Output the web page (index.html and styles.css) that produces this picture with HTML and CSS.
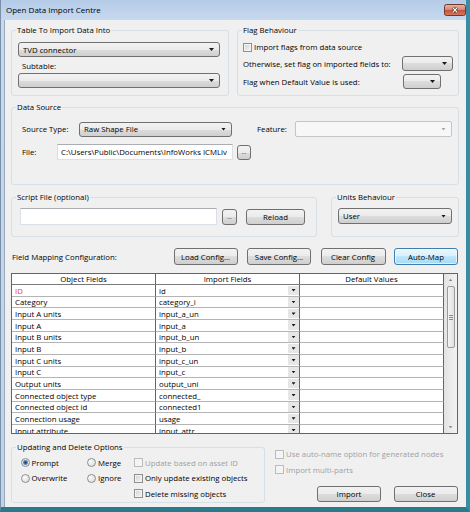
FILE: index.html
```html
<!DOCTYPE html>
<html lang="en">
<head>
    <meta charset="UTF-8">
    <title>Open Data Import Centre</title>
    <link rel="stylesheet" href="styles.css">
</head>
<body>

<div class="window">
    <div class="titlebar">
        <span class="title">Open Data Import Centre</span>
        <span class="close-btn">
            <svg width="22" height="12" viewBox="0 0 22 12">
                <defs>
                    <linearGradient id="closeGrad" x1="0" y1="0" x2="0" y2="1">
                        <stop offset="0" stop-color="#eab4a6"/>
                        <stop offset="0.45" stop-color="#d98a75"/>
                        <stop offset="0.5" stop-color="#c4523b"/>
                        <stop offset="1" stop-color="#d47a60"/>
                    </linearGradient>
                </defs>
                <rect x="0.5" y="0.5" width="21" height="11" rx="2" fill="url(#closeGrad)" stroke="#70392f"/>
                <path d="M8.8 3.6 L13.2 8.4 M13.2 3.6 L8.8 8.4" stroke="#4d2a24" stroke-width="2.6"/>
                <path d="M8.8 3.6 L13.2 8.4 M13.2 3.6 L8.8 8.4" stroke="#fff" stroke-width="1.3"/>
            </svg>
        </span>
    </div>

    <div class="client">
        <!-- Target table and flag options -->
        <div class="top-row">
            <fieldset class="group table-group">
                <legend>Table To Import Data Into</legend>
                <div class="body">
                    <div class="combo"><span>TVD connector</span></div>
                    <div class="subtable-label">Subtable:</div>
                    <div class="combo combo-sub"><span></span></div>
                </div>
            </fieldset>

            <fieldset class="group flag-group">
                <legend>Flag Behaviour</legend>
                <div class="body">
                    <div class="check"><span class="box"></span>Import flags from data source</div>
                    <div class="flag-row first">
                        <span class="flag-label">Otherwise, set flag on imported fields to:</span>
                        <div class="combo flag-combo"><span></span></div>
                    </div>
                    <div class="flag-row">
                        <span class="flag-label">Flag when Default Value is used:</span>
                        <div class="combo flag-combo short"><span></span></div>
                    </div>
                </div>
            </fieldset>
        </div>

        <!-- Data source -->
        <fieldset class="group source-group">
            <legend>Data Source</legend>
            <div class="body">
                <div class="source-row">
                    <span class="source-label">Source Type:</span>
                    <div class="combo source-combo"><span>Raw Shape File</span></div>
                    <span class="feature-label">Feature:</span>
                    <div class="combo disabled feature-combo"><span></span></div>
                </div>
                <div class="file-row">
                    <span class="file-label">File:</span>
                    <div class="textbox file-box">C:\Users\Public\Documents\InfoWorks ICMLiv</div>
                    <div class="btn dots file-dots">...</div>
                </div>
            </div>
        </fieldset>

        <!-- Script + units -->
        <div class="script-row">
            <fieldset class="group script-group">
                <legend>Script File (optional)</legend>
                <div class="body">
                    <div class="textbox script-box"></div>
                    <div class="btn dots script-dots">...</div>
                    <div class="btn reload-btn">Reload</div>
                </div>
            </fieldset>
            <fieldset class="group units-group">
                <legend>Units Behaviour</legend>
                <div class="body">
                    <div class="combo units-combo"><span>User</span></div>
                </div>
            </fieldset>
        </div>

        <!-- Field mapping -->
        <div class="mapping-row">
            <span class="mapping-label">Field Mapping Configuration:</span>
            <div class="btn map-btn">Load Config...</div>
            <div class="btn map-btn">Save Config...</div>
            <div class="btn map-btn clear">Clear Config</div>
            <div class="btn map-btn hot">Auto-Map</div>
        </div>

        <div class="grid">
            <div class="grid-table">
                <div class="grid-head">
                    <div class="hcell">Object Fields</div>
                    <div class="hcell">Import Fields</div>
                    <div class="hcell last">Default Values</div>
                </div>
                <div class="grid-body">
                    <div class="cell key">ID</div><div class="cell pick"><span>id</span><i></i></div><div class="cell val"></div>
                    <div class="cell">Category</div><div class="cell pick"><span>category_i</span><i></i></div><div class="cell val"></div>
                    <div class="cell">Input A units</div><div class="cell pick"><span>input_a_un</span><i></i></div><div class="cell val"></div>
                    <div class="cell">Input A</div><div class="cell pick"><span>input_a</span><i></i></div><div class="cell val"></div>
                    <div class="cell">Input B units</div><div class="cell pick"><span>input_b_un</span><i></i></div><div class="cell val"></div>
                    <div class="cell">Input B</div><div class="cell pick"><span>input_b</span><i></i></div><div class="cell val"></div>
                    <div class="cell">Input C units</div><div class="cell pick"><span>input_c_un</span><i></i></div><div class="cell val"></div>
                    <div class="cell">Input C</div><div class="cell pick"><span>input_c</span><i></i></div><div class="cell val"></div>
                    <div class="cell">Output units</div><div class="cell pick"><span>output_uni</span><i></i></div><div class="cell val"></div>
                    <div class="cell">Connected object type</div><div class="cell pick"><span>connected_</span><i></i></div><div class="cell val"></div>
                    <div class="cell">Connected object id</div><div class="cell pick"><span>connected1</span><i></i></div><div class="cell val"></div>
                    <div class="cell">Connection usage</div><div class="cell pick"><span>usage</span><i></i></div><div class="cell val"></div>
                    <div class="cell">Input attribute</div><div class="cell pick"><span>input_attr</span><i></i></div><div class="cell val"></div>
                </div>
            </div>
            <div class="scrollbar">
                <div class="sb-arrow up"><i></i></div>
                <div class="sb-thumb"><i></i></div>
                <div class="sb-track"></div>
                <div class="sb-arrow down"><i></i></div>
            </div>
        </div>

        <!-- Bottom options and actions -->
        <div class="bottom-row">
            <fieldset class="group update-group">
                <legend>Updating and Delete Options</legend>
                <div class="body options">
                    <div class="opt"><span class="radio on"></span>Prompt</div>
                    <div class="opt"><span class="radio"></span>Merge</div>
                    <div class="opt off"><span class="box"></span>Update based on asset ID</div>
                    <div class="opt"><span class="radio"></span>Overwrite</div>
                    <div class="opt"><span class="radio"></span>Ignore</div>
                    <div class="opt"><span class="box"></span>Only update existing objects</div>
                    <div></div>
                    <div></div>
                    <div class="opt"><span class="box"></span>Delete missing objects</div>
                </div>
            </fieldset>
            <div class="actions">
                <div class="check off"><span class="box"></span>Use auto-name option for generated nodes</div>
                <div class="check off multi"><span class="box"></span>Import multi-parts</div>
                <div class="action-buttons">
                    <div class="btn action-btn">Import</div>
                    <div class="btn action-btn">Close</div>
                </div>
            </div>
        </div>
    </div>
</div>

</body>
</html>
```

FILE: styles.css
```css
* {
    margin: 0;
    padding: 0;
    box-sizing: border-box;
}

body {
    background: #2b7c8e;
    font-family: "Open Sans", sans-serif;
    font-size: 7.8px;
    color: #000;
}

.window {
    width: 470px;
    height: 512px;
    background: linear-gradient(to bottom, #b5cbe7, #c7d9ef 20px, #bfd3ea);
    border-left: 1px solid #7b8fa8;
    border-right: 4px solid #3a8ca4;
    border-bottom: 5px solid #2a7a8c;
    display: flex;
    flex-direction: column;
}

/* Title bar */
.titlebar {
    height: 20px;
    display: flex;
    justify-content: space-between;
    align-items: flex-start;
}

.title {
    line-height: 20px;
    padding-left: 5px;
    font-size: 8px;
}

.close-btn {
    margin-top: 4px;
    display: flex;
}

/* Client area */
.client {
    flex: 1;
    margin-left: 3px;
    background: #f0f0f0;
    border-left: 1px solid #9aa9ba;
    padding: 5px 7px 0 6px;
    display: flex;
    flex-direction: column;
}

.group {
    border: 1px solid #d5dfe5;
    border-radius: 3px;
    min-width: 0;
}

.group legend {
    line-height: 10px;
    margin-left: 4px;
    padding: 0 1px;
}

/* Combos, textboxes, buttons */
.combo {
    height: 15px;
    border: 1px solid #707070;
    border-radius: 3px;
    background: linear-gradient(#f2f2f2, #ebebeb 50%, #dddddd 50%, #cfcfcf);
    display: flex;
    align-items: center;
    padding: 0 5px 0 4px;
}

.combo span {
    flex: 1;
    white-space: nowrap;
    overflow: hidden;
}

.combo::after {
    content: "";
    width: 5px;
    height: 3px;
    background: #1a1a1a;
    clip-path: polygon(0 0, 100% 0, 50% 100%);
}

.combo.disabled {
    background: #f7f7f7;
    border-color: #c2c6ca;
    border-radius: 2px;
}

.combo.disabled::after {
    background: #a8a8a8;
}

.textbox {
    background: #fff;
    border: 1px solid #dbdfe6;
    border-top-color: #abadb3;
    padding-left: 3px;
    display: flex;
    align-items: center;
    white-space: nowrap;
    overflow: hidden;
}

.btn {
    border: 1px solid #707070;
    border-radius: 3px;
    background: linear-gradient(#f2f2f2, #ebebeb 50%, #dddddd 50%, #cfcfcf);
    display: flex;
    align-items: center;
    justify-content: center;
    white-space: nowrap;
}

.btn.hot {
    border-color: #3c7fb1;
    background: linear-gradient(#eaf6fd, #d9f0fc 50%, #bee6fd 50%, #a7d9f5);
    box-shadow: inset 0 0 0 1px rgba(255, 255, 255, 0.6);
}

.btn.dots {
    font-size: 6px;
    line-height: 1;
}

.box {
    width: 9px;
    height: 9px;
    flex: none;
    border: 1px solid #8e8f8f;
    background: linear-gradient(135deg, #cfd2d6, #f7f7f7);
    box-shadow: inset 0 0 0 1px #f4f4f4;
    margin-right: 2px;
}

.radio {
    width: 9px;
    height: 9px;
    flex: none;
    border-radius: 50%;
    border: 1px solid #8e8f8f;
    background: radial-gradient(circle at 35% 35%, #fdfdfd, #d4d4d4);
    margin-right: 2px;
}

.radio.on {
    background: radial-gradient(circle, #1f3f6e 0, #3f6aa6 1.4px, #8ea8cf 2.4px, #e8e8e8 3px, #d4d4d4);
}

.check,
.opt {
    display: flex;
    align-items: center;
    height: 10px;
    white-space: nowrap;
}

.off {
    color: #a0a0a0;
}

.off .box {
    border-color: #bcbcbc;
    background: #f4f4f4;
    box-shadow: none;
}

/* Top row */
.top-row {
    display: flex;
    gap: 8px;
    height: 71px;
}

.table-group {
    width: 218px;
}

.table-group .body {
    padding: 7px 8px 0 6px;
}

.subtable-label {
    line-height: 10px;
    margin: 4px 0 2px 4px;
}

.flag-group {
    flex: 1;
}

.flag-group .body {
    padding: 7px 5px 0 5px;
}

.flag-row {
    display: flex;
    align-items: center;
    margin-top: 3px;
}

.flag-row.first {
    margin-top: 4px;
}

.flag-label {
    width: 160px;
}

.flag-combo {
    width: 51px;
}

.flag-combo.short {
    width: 38px;
}

/* Data source */
.source-group {
    height: 83px;
    margin-top: 6px;
}

.source-group .body {
    padding: 9px 0 0 10px;
}

.source-row,
.file-row {
    display: flex;
    align-items: center;
}

.source-label {
    width: 57px;
}

.source-combo {
    width: 153px;
}

.feature-label {
    margin-left: 25px;
    width: 38px;
}

.feature-combo {
    width: 157px;
    height: 16px;
}

.file-row {
    margin-top: 7px;
}

.file-label {
    width: 35px;
}

.file-box {
    width: 176px;
    height: 16px;
}

.file-dots {
    width: 14px;
    height: 15px;
    margin-left: 4px;
}

/* Script + units */
.script-row {
    display: flex;
    gap: 14px;
    height: 45px;
    margin-top: 7px;
}

.script-group {
    width: 306px;
}

.script-group .body {
    display: flex;
    align-items: center;
    padding: 6px 0 0 8px;
}

.script-box {
    width: 197px;
    height: 17px;
}

.script-dots {
    width: 15px;
    height: 16px;
    margin-left: 5px;
}

.reload-btn {
    width: 59px;
    height: 16px;
    margin-left: 9px;
}

.units-group {
    flex: 1;
}

.units-group .body {
    padding: 6px 0 0 6px;
}

.units-combo {
    width: 114px;
    height: 16px;
}

/* Mapping buttons */
.mapping-row {
    display: flex;
    align-items: center;
    height: 17px;
    margin-top: 11px;
    padding-right: 1px;
}

.mapping-label {
    flex: 1;
    padding-left: 1px;
}

.map-btn {
    width: 64px;
    height: 17px;
    margin-left: 9.5px;
}

.map-btn.clear {
    width: 65px;
}

.map-btn.hot {
    margin-left: 8.5px;
}

/* Field grid */
.grid {
    height: 161px;
    margin-top: 8px;
    margin-right: 1px;
    border: 1px solid #646464;
    background: #fff;
    display: flex;
    overflow: hidden;
}

.grid-table {
    width: 432px;
    display: flex;
    flex-direction: column;
}

.grid-head {
    display: grid;
    grid-template-columns: 144px 144px 144px;
    height: 13px;
    border-bottom: 1px solid #7a7a7a;
}

.hcell {
    display: flex;
    align-items: center;
    justify-content: center;
    border-right: 1px solid #646464;
}

.grid-body {
    display: grid;
    grid-template-columns: 144px 144px 144px;
    grid-auto-rows: 11.67px;
}

.cell {
    border-right: 1px solid #646464;
    border-bottom: 1px solid #b4b4b4;
    padding: 1px 0 0 3px;
    display: flex;
    align-items: center;
    white-space: nowrap;
    overflow: hidden;
}

.cell.key {
    color: #e5482a;
}

.cell.pick span {
    flex: 1;
}

.cell.pick i {
    width: 11px;
    height: 100%;
    margin-top: -1px;
    background: #e6e6e6;
    display: flex;
    align-items: center;
    justify-content: center;
}

.cell.pick i::after,
.sb-arrow i {
    content: "";
    width: 4px;
    height: 2.5px;
    background: #1a1a1a;
    clip-path: polygon(0 0, 100% 0, 50% 100%);
}

.scrollbar {
    flex: 1;
    display: flex;
    flex-direction: column;
    background: linear-gradient(to right, #e3e3e3, #f2f2f2);
}

.sb-arrow {
    height: 12px;
    display: flex;
    align-items: center;
    justify-content: center;
}

.sb-arrow i {
    background: #8a8a8a;
}

.sb-arrow.up i {
    clip-path: polygon(50% 0, 100% 100%, 0 100%);
}

.sb-thumb {
    height: 62px;
    margin: 0 2px 0 3px;
    border: 1px solid #9b9b9b;
    border-radius: 2px;
    background: linear-gradient(to right, #f4f4f4, #e0e0e0);
    display: flex;
    align-items: center;
    justify-content: center;
}

.sb-thumb i {
    width: 4px;
    height: 5px;
    background: repeating-linear-gradient(#8a8a8a 0 1px, transparent 1px 2px);
}

.sb-track {
    flex: 1;
}

/* Bottom */
.bottom-row {
    display: flex;
    height: 61px;
    margin-top: 8px;
}

.update-group {
    width: 254px;
}

.options {
    display: grid;
    grid-template-columns: 66.5px 47px 1fr;
    grid-auto-rows: 10px;
    row-gap: 5.5px;
    padding: 5.5px 0 0 8.5px;
}

.actions {
    flex: 1;
    display: flex;
    flex-direction: column;
    padding: 7px 1.5px 0 10px;
}

.check.multi {
    margin-top: 5.5px;
}

.action-buttons {
    display: flex;
    justify-content: flex-end;
    gap: 12.5px;
    margin-top: 11.5px;
}

.action-btn {
    width: 64px;
    height: 16px;
}
```
